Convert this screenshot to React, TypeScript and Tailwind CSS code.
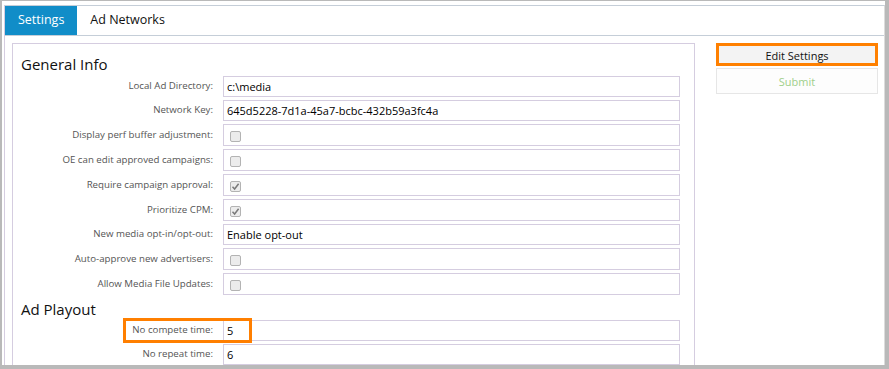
import React from "react";

type Row = { label: string; kind: "text" | "cb"; value?: string; checked?: boolean; highlight?: boolean };

const general: Row[] = [
  { label: "Local Ad Directory:", kind: "text", value: "c:\\media" },
  { label: "Network Key:", kind: "text", value: "645d5228-7d1a-45a7-bcbc-432b59a3fc4a" },
  { label: "Display perf buffer adjustment:", kind: "cb", checked: false },
  { label: "OE can edit approved campaigns:", kind: "cb", checked: false },
  { label: "Require campaign approval:", kind: "cb", checked: true },
  { label: "Prioritize CPM:", kind: "cb", checked: true },
  { label: "New media opt-in/opt-out:", kind: "text", value: "Enable opt-out" },
  { label: "Auto-approve new advertisers:", kind: "cb", checked: false },
  { label: "Allow Media File Updates:", kind: "cb", checked: false },
];

const playout: Row[] = [
  { label: "No compete time:", kind: "text", value: "5", highlight: true },
  { label: "No repeat time:", kind: "text", value: "6" },
];

function Checkbox({ checked }: { checked?: boolean }) {
  return (
    <span className="mt-[2px] ml-[6px] flex h-[11px] w-[11px] items-center justify-center rounded-[2px] border border-[#b3b3b3] bg-[#ececec]">
      {checked && (
        <svg width="9" height="9" viewBox="0 0 9 9">
          <path d="M1.5 4.8 L3.6 7 L7.6 1.8" fill="none" stroke="#7a7a7a" strokeWidth="1.5" />
        </svg>
      )}
    </span>
  );
}

function FormRow({ row }: { row: Row }) {
  return (
    <div className="relative flex items-stretch">
      <div className="flex w-[192px] shrink-0 items-center justify-end whitespace-nowrap text-[9.7px] text-[#555]">
        {row.label}
      </div>
      <div
        className={
          "ml-[10px] flex w-[457px] items-center border border-[#d5cde0] bg-white " +
          (row.kind === "text" ? "h-[21px] pl-[3px] pt-[2px]" : "h-[22px]")
        }
      >
        {row.kind === "text" ? (
          <span className="text-[11px] text-black">{row.value}</span>
        ) : (
          <Checkbox checked={row.checked} />
        )}
      </div>
      {row.highlight && (
        <div className="absolute left-[102px] top-[-2px] h-[25px] w-[129px] border-[3px] border-[#ff7f00]" />
      )}
    </div>
  );
}

export default function App() {
  return (
    <div
      className="h-[369px] w-[889px] overflow-hidden bg-[#b9b9b9] pl-[2px] pt-[1px]"
      style={{ fontFamily: "'Open Sans', 'Noto Sans', sans-serif" }}
    >
      <div className="h-[364px] w-[883px] overflow-hidden bg-white pt-[4px]">
        <div className="ml-[2px] h-[400px] w-[881px] border-l border-r border-t border-l-[#d5cde0] border-r-[#dcdcdc] border-t-[#c5ced8]">
          <div className="flex h-[30px] border-b border-[#c5ced8]">
            <div className="flex h-[29px] items-center bg-[#118dc8] px-[13px] text-[12.5px] text-white">Settings</div>
            <div className="flex h-[29px] items-center px-[13px] text-[12.5px] text-[#111]">Ad Networks</div>
          </div>
          <div className="flex gap-[21px] pl-[7px] pr-[6px] pt-[7px]">
            <div className="h-[400px] w-[683px] border border-[#d5cde0] pl-[8px] pr-[13px] pt-[9px]">
              <div className="mb-[1px] h-[22px] text-[15px] leading-[22px] text-[#111]">General Info</div>
              <div className="flex flex-col gap-[3px]">
                {general.map((r) => (
                  <FormRow key={r.label} row={r} />
                ))}
              </div>
              <div className="mt-[3px] h-[22px] text-[15px] leading-[22px] text-[#111]">Ad Playout</div>
              <div className="flex flex-col gap-[3px]">
                {playout.map((r) => (
                  <FormRow key={r.label} row={r} />
                ))}
              </div>
            </div>
            <div className="flex w-[162px] flex-col">
              <div className="flex h-[23px] items-center justify-center border-[3px] border-[#ff8000] bg-[#f3f3f3] pt-[3px] text-[11px] text-[#111]">
                Edit Settings
              </div>
              <div className="mt-[2px] flex h-[26px] items-center justify-center border border-[#e6e6e6] bg-[#fdfdfd] pt-[2px] text-[11px] text-[#9fcf8a]">
                Submit
              </div>
            </div>
          </div>
        </div>
      </div>
    </div>
  );
}
